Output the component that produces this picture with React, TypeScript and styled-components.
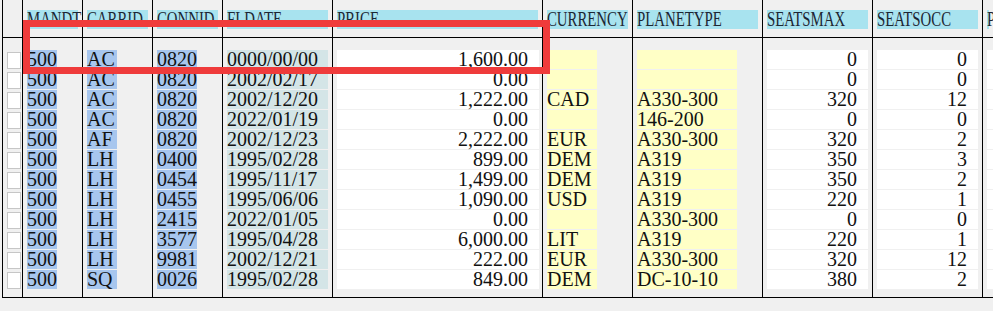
import React from 'react'
import styled, { createGlobalStyle } from 'styled-components'

const GlobalStyle = createGlobalStyle`
  html, body {
    margin: 0;
    padding: 0;
    background: #f0f0f0;
    overflow: hidden;
  }
  body {
    font-family: 'Liberation Serif', 'Times New Roman', serif;
    color: #111;
  }
`

type Kind = 'key' | 'date' | 'num' | 'char'

type Field = {
  name: string
  width?: number
  field: number
  kind: Kind
}

const fields: Field[] = [
  { name: 'MANDT', width: 60, field: 30, kind: 'key' },
  { name: 'CARRID', width: 70, field: 30, kind: 'key' },
  { name: 'CONNID', width: 70, field: 40, kind: 'key' },
  { name: 'FLDATE', width: 110, field: 101, kind: 'date' },
  { name: 'PRICE', width: 210, field: 202, kind: 'num' },
  { name: 'CURRENCY', width: 90, field: 50, kind: 'char' },
  { name: 'PLANETYPE', width: 130, field: 100, kind: 'char' },
  { name: 'SEATSMAX', width: 110, field: 101, kind: 'num' },
  { name: 'SEATSOCC', width: 110, field: 101, kind: 'num' },
  { name: 'PAYMENTSUM', field: 200, kind: 'num' },
]

// one line per flight, same order as the fields above
const flights: string[][] = [
  ['500', 'AC', '0820', '0000/00/00', '1,600.00', '', '', '0', '0', ''],
  ['500', 'AC', '0820', '2002/02/17', '0.00', '', '', '0', '0', ''],
  ['500', 'AC', '0820', '2002/12/20', '1,222.00', 'CAD', 'A330-300', '320', '12', ''],
  ['500', 'AC', '0820', '2022/01/19', '0.00', '', '146-200', '0', '0', ''],
  ['500', 'AF', '0820', '2002/12/23', '2,222.00', 'EUR', 'A330-300', '320', '2', ''],
  ['500', 'LH', '0400', '1995/02/28', '899.00', 'DEM', 'A319', '350', '3', ''],
  ['500', 'LH', '0454', '1995/11/17', '1,499.00', 'DEM', 'A319', '350', '2', ''],
  ['500', 'LH', '0455', '1995/06/06', '1,090.00', 'USD', 'A319', '220', '1', ''],
  ['500', 'LH', '2415', '2022/01/05', '0.00', '', 'A330-300', '0', '0', ''],
  ['500', 'LH', '3577', '1995/04/28', '6,000.00', 'LIT', 'A319', '220', '1', ''],
  ['500', 'LH', '9981', '2002/12/21', '222.00', 'EUR', 'A330-300', '320', '12', ''],
  ['500', 'SQ', '0026', '1995/02/28', '849.00', 'DEM', 'DC-10-10', '380', '2', ''],
]

const fills: Record<Kind, string> = {
  key: '#a7c6ee',
  date: '#d4e5e7',
  num: '#ffffff',
  char: '#ffffc6',
}

const Page = styled.div`
  position: relative;
  width: 993px;
  height: 311px;
  padding-left: 2px;
  box-sizing: border-box;
  overflow: hidden;
`

const Grid = styled.div`
  display: flex;
  width: 991px;
  border-bottom: 1px solid #000;
  overflow: hidden;
`

const Column = styled.div<{ $width?: number }>`
  display: flex;
  flex-direction: column;
  flex: ${(p) => (p.$width ? `0 0 ${p.$width}px` : '1 0 0')};
  min-width: 0;
  border-left: 1px solid #000;
  box-sizing: border-box;
`

const Head = styled.div`
  height: 38px;
  padding: 10px 4px 0;
  border-bottom: 1px solid #000;
  box-sizing: border-box;
`

const Label = styled.div`
  height: 19px;
  background: #a8e3ef;
  white-space: nowrap;
`

// SAP GUI draws its labels in a narrow half-width face
const LabelText = styled.span`
  display: inline-block;
  font-size: 20px;
  line-height: 19px;
  color: #1c2633;
  transform: scaleX(0.74);
  transform-origin: left center;
`

const Body = styled.div`
  display: flex;
  flex-direction: column;
  padding: 12px 0 7px 4px;
`

const Cell = styled.div<{ $kind: Kind; $width: number }>`
  width: ${(p) => p.$width}px;
  height: 19px;
  margin-bottom: 1px;
  padding-right: ${(p) => (p.$kind === 'num' ? '11px' : '0')};
  box-sizing: border-box;
  background: ${(p) => fills[p.$kind]};
  text-align: ${(p) => (p.$kind === 'num' ? 'right' : 'left')};
  font-size: 20px;
  line-height: 19px;
  white-space: nowrap;
  flex-shrink: 0;
`

const Check = styled.div`
  width: 14px;
  height: 17px;
  margin: 2px 0 1px;
  background: #fff;
  border: 1px solid #c6c6c6;
  box-sizing: border-box;
`

const Marker = styled.div`
  position: absolute;
  left: 23px;
  top: 20px;
  width: 527px;
  height: 54px;
  border: 7px solid #ef3b3b;
  box-sizing: border-box;
  pointer-events: none;
`

const App = () => {
  return (
    <Page>
      <GlobalStyle />
      <Grid>
        <Column $width={20}>
          <Head />
          <Body>
            {flights.map((_, i) => (
              <Check key={i} />
            ))}
          </Body>
        </Column>
        {fields.map((f, c) => (
          <Column key={f.name} $width={f.width}>
            <Head>
              <Label>
                <LabelText>{f.name}</LabelText>
              </Label>
            </Head>
            <Body>
              {flights.map((row, i) => (
                <Cell key={i} $kind={f.kind} $width={f.field}>
                  {row[c]}
                </Cell>
              ))}
            </Body>
          </Column>
        ))}
      </Grid>
      <Marker />
    </Page>
  )
}

export default App
